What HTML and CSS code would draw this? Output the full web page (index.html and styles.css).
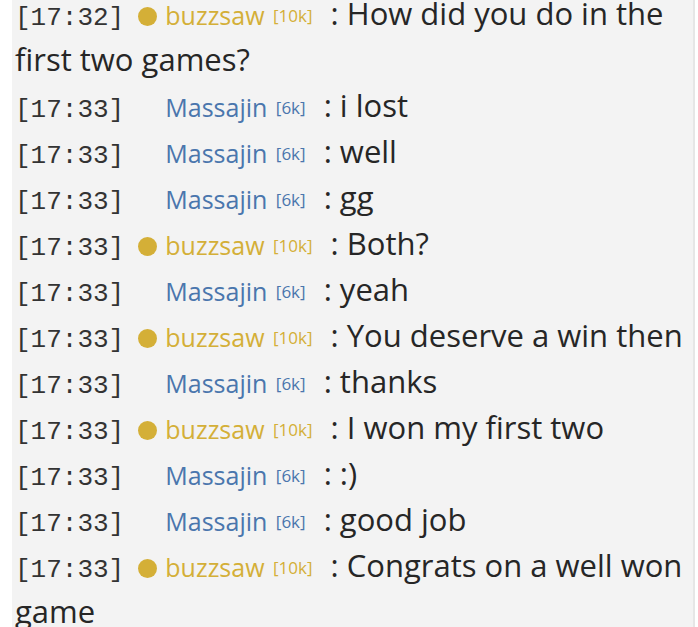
FILE: index.html
```html
<!DOCTYPE html>
<html lang="en">
<head>
  <meta charset="UTF-8">
  <meta name="viewport" content="width=device-width, initial-scale=1">
  <title>Game Chat</title>
  <link rel="stylesheet" href="styles.css">
</head>
<body>

  <div class="chat-log">
    <div class="line"><span class="time">[17:32]</span> <span class="dot"></span><span class="name gold">buzzsaw <span class="rank">[10k]</span></span> : How did you do in the first two games?</div>
    <div class="line"><span class="time">[17:33]</span> <span class="dot none"></span><span class="name blue">Massajin <span class="rank">[6k]</span></span> : i lost</div>
    <div class="line"><span class="time">[17:33]</span> <span class="dot none"></span><span class="name blue">Massajin <span class="rank">[6k]</span></span> : well</div>
    <div class="line"><span class="time">[17:33]</span> <span class="dot none"></span><span class="name blue">Massajin <span class="rank">[6k]</span></span> : gg</div>
    <div class="line"><span class="time">[17:33]</span> <span class="dot"></span><span class="name gold">buzzsaw <span class="rank">[10k]</span></span> : Both?</div>
    <div class="line"><span class="time">[17:33]</span> <span class="dot none"></span><span class="name blue">Massajin <span class="rank">[6k]</span></span> : yeah</div>
    <div class="line"><span class="time">[17:33]</span> <span class="dot"></span><span class="name gold">buzzsaw <span class="rank">[10k]</span></span> : You deserve a win then</div>
    <div class="line"><span class="time">[17:33]</span> <span class="dot none"></span><span class="name blue">Massajin <span class="rank">[6k]</span></span> : thanks</div>
    <div class="line"><span class="time">[17:33]</span> <span class="dot"></span><span class="name gold">buzzsaw <span class="rank">[10k]</span></span> : I won my first two</div>
    <div class="line"><span class="time">[17:33]</span> <span class="dot none"></span><span class="name blue">Massajin <span class="rank">[6k]</span></span> : :)</div>
    <div class="line"><span class="time">[17:33]</span> <span class="dot none"></span><span class="name blue">Massajin <span class="rank">[6k]</span></span> : good job</div>
    <div class="line"><span class="time">[17:33]</span> <span class="dot"></span><span class="name gold">buzzsaw <span class="rank">[10k]</span></span> : Congrats on a well won game</div>
  </div>

</body>
</html>
```

FILE: styles.css
```css
* {
  box-sizing: border-box;
}
body {
  margin: 0;
  background: white;
  overflow: hidden;
}
.chat-log {
  margin: -10px 0 0 12px;
  width: 683px;
  background: #f3f3f3;
  border-right: 2px solid #e6e6e6;
  padding: 0 0 0 3px;
  font-family: 'Open Sans', sans-serif;
  font-size: 31px;
  line-height: 46px;
  color: #262626;
}
.time {
  font-family: 'Liberation Mono', monospace;
  font-size: 26px;
  line-height: 1;
  color: #333;
}
.dot {
  display: inline-block;
  width: 19px;
  height: 19px;
  border-radius: 50%;
  background: #d4af37;
  margin-left: 6px;
  margin-right: 8px;
  vertical-align: -1px;
}
.dot.none {
  visibility: hidden;
}
.name {
  font-size: 25px;
  line-height: 1;
  margin-right: 10px;
}
.gold {
  color: #d4af37;
}
.blue {
  color: #4a76ad;
}
.rank {
  font-size: 17px;
  line-height: 1;
  margin-left: 2px;
  vertical-align: 3px;
}
```
